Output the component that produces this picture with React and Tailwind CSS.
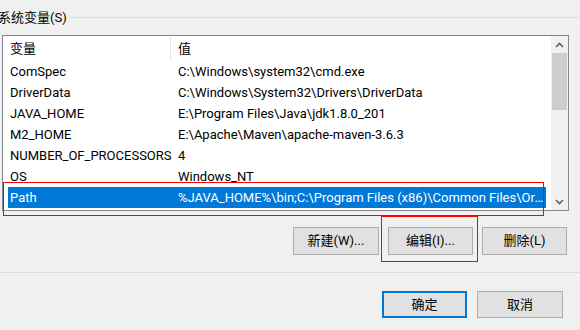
import React from "react";

const rows = [
  ["ComSpec", "C:\\Windows\\system32\\cmd.exe"],
  ["DriverData", "C:\\Windows\\System32\\Drivers\\DriverData"],
  ["JAVA_HOME", "E:\\Program Files\\Java\\jdk1.8.0_201"],
  ["M2_HOME", "E:\\Apache\\Maven\\apache-maven-3.6.3"],
  ["NUMBER_OF_PROCESSORS", "4"],
  ["OS", "Windows_NT"],
  [
    "Path",
    "%JAVA_HOME%\\bin;C:\\Program Files (x86)\\Common Files\\Oracle\\Java\\javapath;C:\\Windows\\system32",
  ],
];

function Chevron({ down }) {
  return (
    <svg width="9" height="6" viewBox="0 0 9 6">
      <path
        d={down ? "M1 1l3.5 3.5L8 1" : "M1 5l3.5-3.5L8 5"}
        fill="none"
        stroke="#606060"
        strokeWidth="1.6"
      />
    </svg>
  );
}

function Btn({ children, primary, w = "w-[85px]", h = "h-[28px]" }) {
  return (
    <div
      className={`${w} ${h} flex items-center justify-center bg-[#e1e1e1] text-[13px] text-black ${
        primary ? "border-2 border-[#0078d7]" : "border border-[#adadad]"
      }`}
    >
      {children}
    </div>
  );
}

export default function App() {
  return (
    <div
      className="relative w-[580px] h-[330px] overflow-hidden bg-[#f0f0f0] text-black"
      style={{ fontFamily: 'Roboto, "Noto Sans CJK SC", sans-serif' }}
    >
      {/* group title */}
      <div className="flex items-center h-[34px]">
        <span className="-ml-[2px] pr-[3px] text-[13px] leading-none">系统变量(S)</span>
        <div className="flex-1 h-px bg-[#dcdcdc]" />
      </div>

      {/* list */}
      <div className="ml-[2px] mt-[1px] w-[567px] h-[176px] border border-[#828790] bg-white flex">
        <div className="flex-1 min-w-0 flex flex-col text-[13px]">
          <div className="h-[25px] px-[5px] flex">
            <div className="w-[163px] pl-[2px] flex items-center my-[1px] border-r border-[#e5e5e5]">
              变量
            </div>
            <div className="pl-[7px] flex items-center">值</div>
          </div>
          {rows.map(([k, v]) => {
            const sel = k === "Path";
            return (
              <div key={k} className="h-[21px] px-[5px] flex">
                <div
                  className={`flex-1 flex items-center min-w-0 ${
                    sel ? "bg-[#0078d7] text-white" : ""
                  }`}
                >
                  <div className="w-[163px] pl-[2px] shrink-0 whitespace-nowrap">{k}</div>
                  <div className="flex-1 min-w-0 pl-[7px] pr-[2px] truncate">{v}</div>
                </div>
              </div>
            );
          })}
        </div>
        {/* scrollbar */}
        <div className="w-[17px] shrink-0 bg-[#f0f0f0] flex flex-col">
          <div className="h-[17px] flex items-center justify-center">
            <Chevron />
          </div>
          <div className="h-[57px] mx-[1px] bg-[#cdcdcd]" />
          <div className="flex-1" />
          <div className="h-[17px] flex items-center justify-center">
            <Chevron down />
          </div>
        </div>
      </div>

      {/* list buttons */}
      <div className="mt-[16px] pr-[13px] flex justify-end gap-[9px]">
        <Btn w="w-[86px]">新建(W)...</Btn>
        <Btn>编辑(I)...</Btn>
        <Btn>删除(L)</Btn>
      </div>

      <div className="mt-[17px] h-px bg-[#dcdcdc]" />

      {/* dialog buttons */}
      <div className="mt-[18px] pr-[17px] flex justify-end gap-[10px]">
        <Btn primary h="h-[27px]">确定</Btn>
        <Btn w="w-[86px]" h="h-[27px]">取消</Btn>
      </div>

      {/* annotations */}
      <div className="absolute left-[3px] top-[182px] w-[541px] h-[34px] border border-[#ff0000]" />
      <div className="absolute left-[381px] top-[216px] w-[97px] h-[46px] border border-[#ff0000]" />
    </div>
  );
}
